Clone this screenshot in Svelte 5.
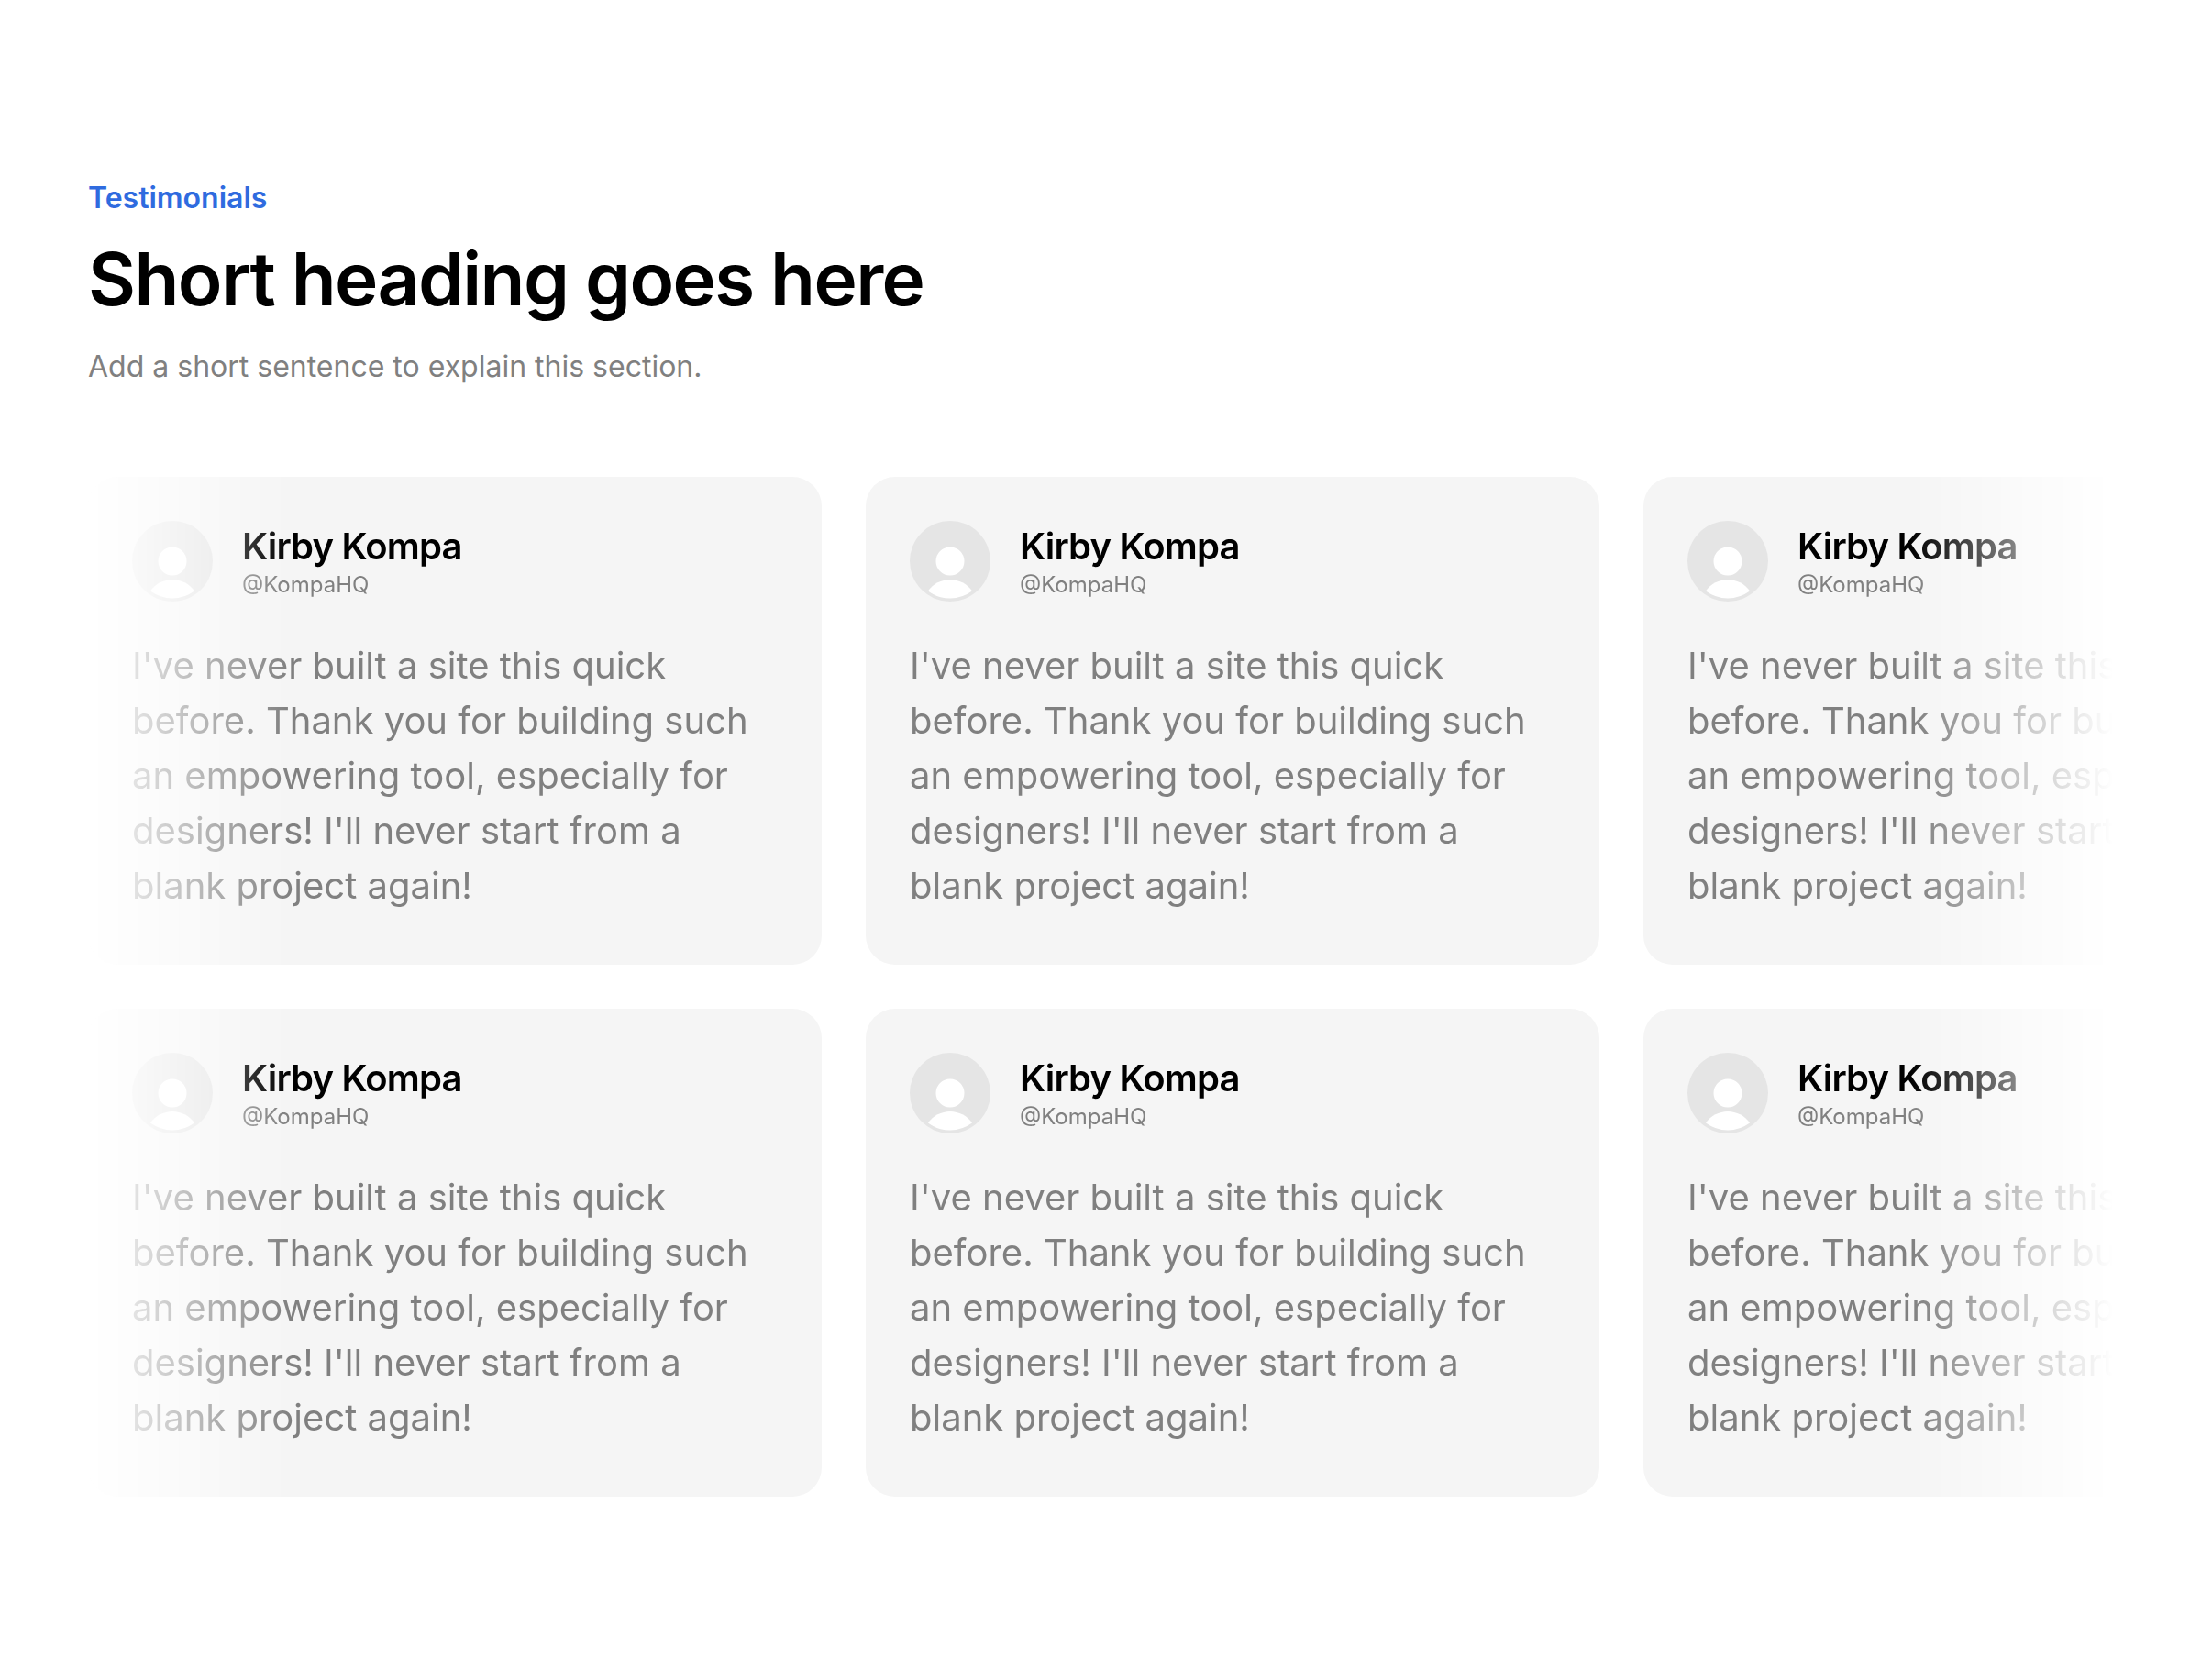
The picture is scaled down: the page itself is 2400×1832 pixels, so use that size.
<script lang="ts">
	const rows = [0, 1];
	const cards = [0, 1, 2];
</script>

<main class="section">
	<header class="intro">
		<span class="eyebrow">Testimonials</span>
		<h1 class="title">Short heading goes here</h1>
		<p class="lead">Add a short sentence to explain this section.</p>
	</header>

	<div class="rows">
		{#each rows as row (row)}
			<div class="row">
				{#each cards as card (card)}
					<article class="card">
						<div class="person">
							<svg class="avatar" viewBox="0 0 88 88" aria-hidden="true">
								<circle cx="44" cy="44" r="44" fill="#e5e5e5" />
								<circle cx="44" cy="44" r="15.5" fill="#fff" />
								<path d="M20 76.6A29.2 29.2 0 0 1 68 76.6A40.5 40.5 0 0 1 20 76.6Z" fill="#fff" />
							</svg>
							<div class="who">
								<span class="name">Kirby Kompa</span>
								<span class="handle">@KompaHQ</span>
							</div>
						</div>
						<p class="quote">
							I've never built a site this quick before. Thank you for building such an empowering
							tool, especially for designers! I'll never start from a blank project again!
						</p>
					</article>
				{/each}
			</div>
		{/each}
	</div>
</main>

<style>
	:global(body) {
		background: #fff;
	}

	.section {
		box-sizing: border-box;
		width: 2400px;
		height: 1832px;
		padding: 192px 96px 0;
		font-family: Inter, 'Liberation Sans', sans-serif;
		display: flex;
		flex-direction: column;
		gap: 96px;
	}

	.intro {
		display: flex;
		flex-direction: column;
	}

	.eyebrow {
		font-size: 32px;
		line-height: 48px;
		font-weight: 600;
		color: #2f6bdf;
	}

	.title {
		margin: 16px 0 0;
		font-size: 80px;
		line-height: 96px;
		font-weight: 600;
		letter-spacing: -0.02em;
		color: #000;
	}

	.lead {
		margin: 24px 0 0;
		font-size: 32px;
		line-height: 48px;
		color: #808080;
	}

	.rows {
		display: flex;
		flex-direction: column;
		gap: 48px;
		overflow: hidden;
		-webkit-mask-image: linear-gradient(90deg, transparent 0, #000 10%, #000 90%, transparent 100%);
		mask-image: linear-gradient(90deg, transparent 0, #000 10%, #000 90%, transparent 100%);
	}

	.row {
		display: flex;
		gap: 48px;
	}

	.card {
		box-sizing: border-box;
		flex: 0 0 800px;
		height: 532px;
		padding: 48px;
		border-radius: 32px;
		background: #f5f5f5;
	}

	.person {
		display: flex;
		align-items: center;
		gap: 32px;
	}

	.avatar {
		width: 88px;
		height: 88px;
		display: block;
	}

	.who {
		display: flex;
		flex-direction: column;
	}

	.name {
		font-size: 40px;
		line-height: 52px;
		font-weight: 600;
		letter-spacing: -0.02em;
		color: #000;
	}

	.handle {
		font-size: 24px;
		line-height: 32px;
		color: #808080;
	}

	.quote {
		margin: 40px 0 0;
		font-size: 40px;
		line-height: 60px;
		color: #808080;
	}
</style>
